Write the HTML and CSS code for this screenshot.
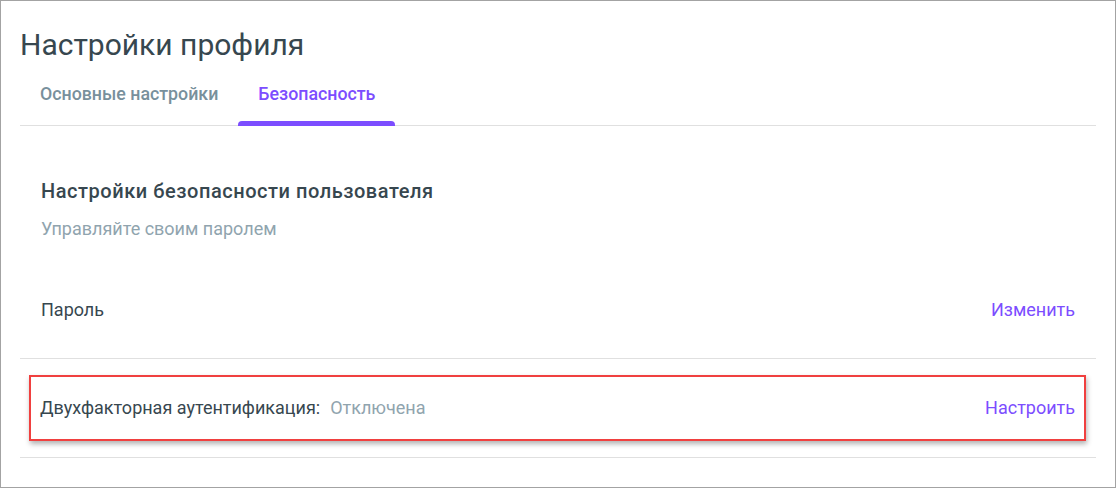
FILE: index.html
```html
<!DOCTYPE html>
<html lang="ru">
<head>
<meta charset="utf-8">
<title>Настройки профиля</title>
<link rel="stylesheet" href="styles.css">
</head>
<body>
<div class="frame">
  <h1 class="title">Настройки профиля</h1>
  <nav class="tabs">
    <div class="tab">Основные настройки</div>
    <div class="tab active">Безопасность</div>
  </nav>
  <section class="section">
    <h2 class="section-title">Настройки безопасности пользователя</h2>
    <p class="section-sub">Управляйте своим паролем</p>
  </section>
  <div class="row row-pass">
    <span class="label">Пароль</span>
    <a class="action">Изменить</a>
  </div>
  <div class="row row-2fa">
    <div class="highlight">
      <span class="label">Двухфакторная аутентификация:<span class="status">Отключена</span></span>
      <a class="action">Настроить</a>
    </div>
  </div>
</div>
</body>
</html>
```
FILE: styles.css
```css
* { box-sizing: border-box; }
html, body { margin: 0; padding: 0; background: #fff; }
body { font-family: Roboto, "Noto Sans", sans-serif; color: #37474f; }
.frame {
  width: 1116px;
  height: 488px;
  border: 1px solid #a3a3a3;
  padding: 0 19px;
  overflow: hidden;
}
.title {
  margin: 26px 0 0 0;
  font-size: 30px;
  font-weight: 400;
  line-height: 36px;
  color: #37474f;
}
.tabs {
  display: flex;
  border-bottom: 1px solid #e0e0e0;
  height: 63px;
}
.tab {
  padding: 0 20px;
  font-size: 17.8px;
  font-weight: 500;
  color: #78909c;
  line-height: 62px;
  position: relative;
}
.tab.active { color: #7c4dff; }
.tab.active::after {
  content: "";
  position: absolute;
  left: 0; right: 0; bottom: -1px;
  height: 5px;
  background: #7c4dff;
  border-radius: 4px 4px 0 0;
}
.section { padding: 53px 21px 0 21px; }
.section-title {
  margin: 0;
  font-size: 20px;
  font-weight: 500;
  letter-spacing: 0.54px;
  line-height: 24px;
  color: #37474f;
}
.section-sub {
  margin: 15px 0 0 0;
  font-size: 18px;
  line-height: 22px;
  color: #90a4ae;
}
.row {
  display: flex;
  align-items: center;
  justify-content: space-between;
  border-bottom: 1px solid #e0e0e0;
  padding: 0 21px;
  font-size: 18px;
}
.row-pass {
  height: 119px;
  padding-top: 20px;
}
.label { color: #37474f; }
.action { color: #7c4dff; cursor: pointer; }
.status { color: #90a4ae; margin-left: 10px; }
.row-2fa {
  height: 99px;
  align-items: flex-start;
  padding: 16px 10px 0 9px;
}
.highlight {
  width: 100%;
  height: 66px;
  border: 2px solid #f0403f;
  box-shadow: 1px 3px 5px rgba(0,0,0,0.3);
  display: flex;
  align-items: center;
  justify-content: space-between;
  padding: 0 9px 2px 9px;
}
```
